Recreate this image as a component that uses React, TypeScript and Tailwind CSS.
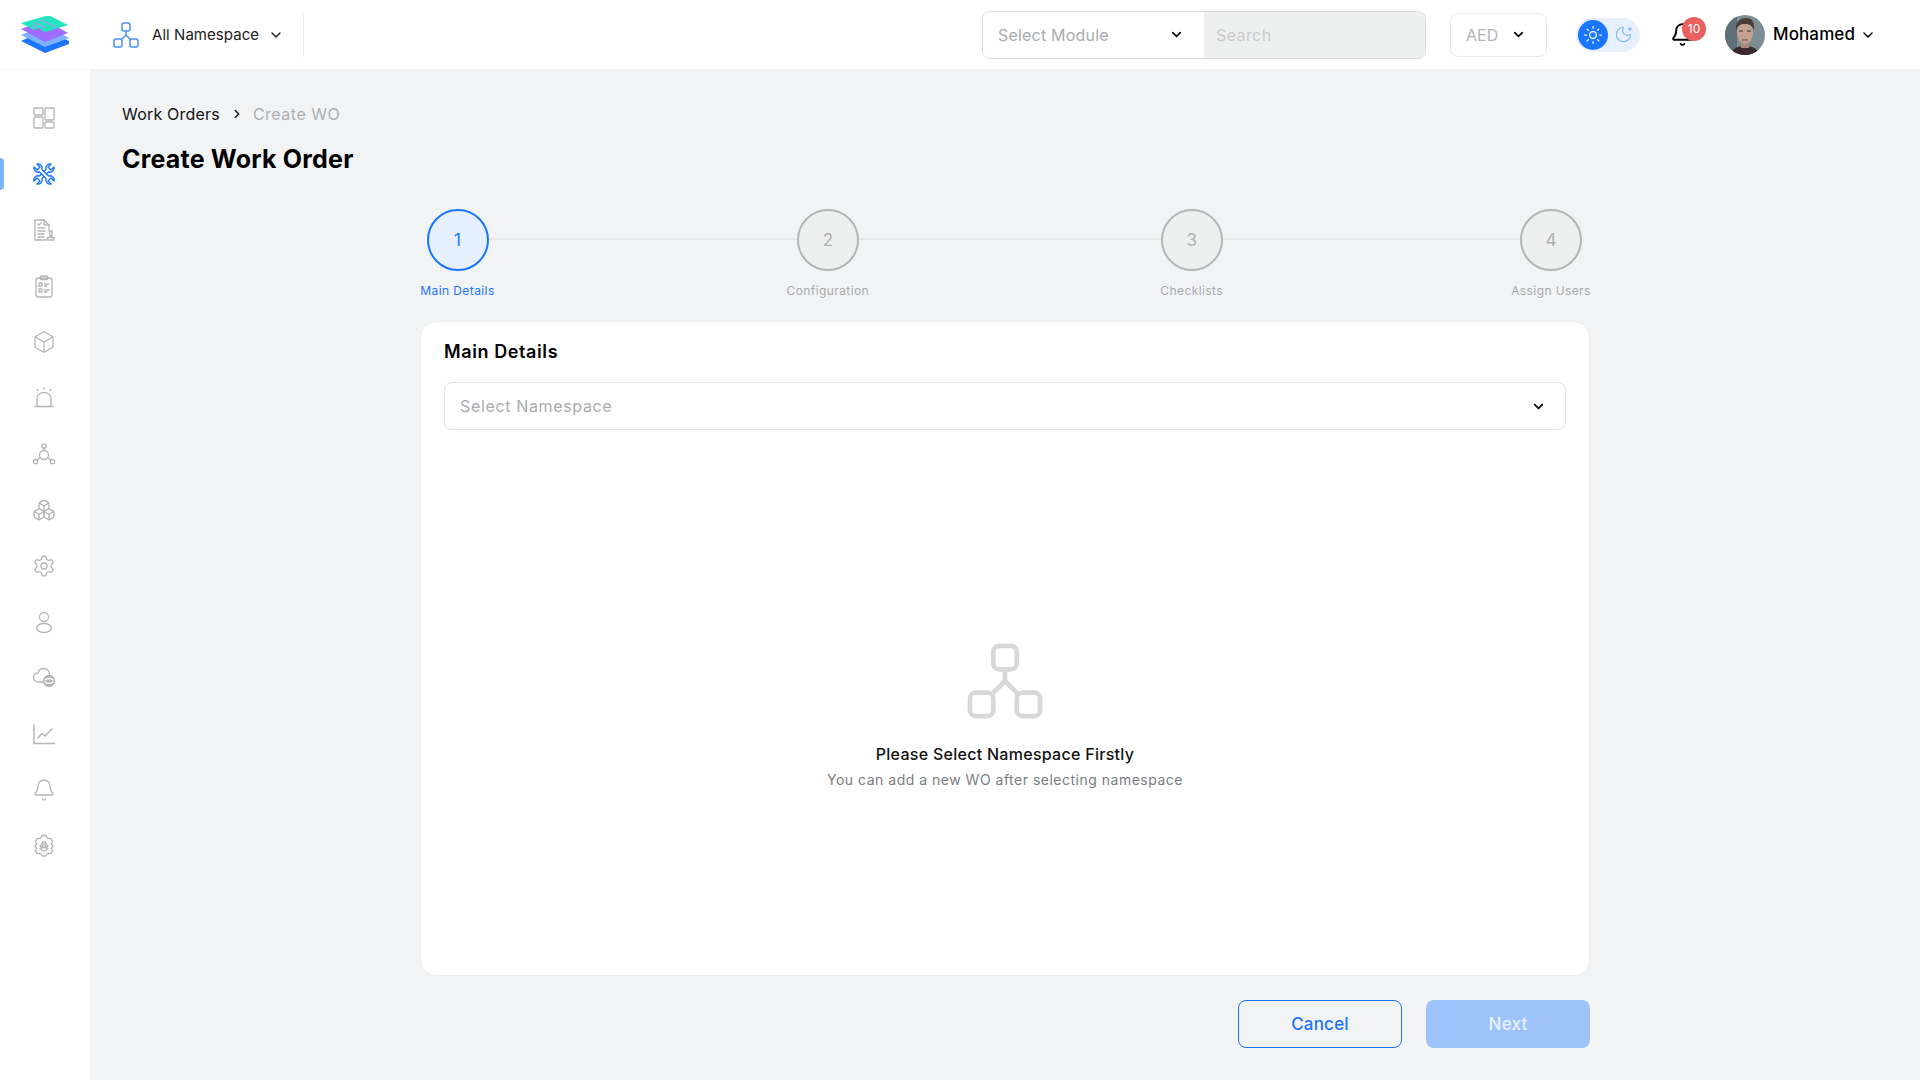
import { Bell, Box, Boxes, ChevronDown, ChevronRight, MoonStar, Settings, Sun } from "lucide-react";
import type { ReactNode } from "react";

const fontStack = "font-['Inter','Noto_Sans',sans-serif]";

function Logo() {
  return (
    <svg width="50" height="40" viewBox="0 0 50 40">
      <path d="M1 26 L25 38 L49 29 L49 26 L25 15 Z" fill="#1a75ff" />
      <path d="M1 20 L25 32 L49 23 L25 10 Z" fill="#7db1ff" />
      <path d="M1 14 L25 27 L48 18 L25 5 Z" fill="#a06bff" />
      <path d="M1 8 L14 15 L18 13 L25 17 L48 10 L30 1 L26 1 Z" fill="#1ee6bd" />
      <path d="M14 7 L26 13 M20 4.5 L36 12 M11 10 L18 13.5" stroke="#8fa6ef" strokeWidth="1.6" fill="none" />
    </svg>
  );
}

function NamespaceIcon({ size, color, sw }: { size: number; color: string; sw: number }) {
  return (
    <svg width={size} height={size} viewBox="0 0 26 26" fill="none" stroke={color} strokeWidth={sw}>
      <rect x="9" y="1" width="8" height="8" rx="2" />
      <rect x="1" y="17" width="8" height="8" rx="2" />
      <rect x="17" y="17" width="8" height="8" rx="2" />
      <path d="M13 9 V13 M13 13 L8 18 M13 13 L18 18" />
    </svg>
  );
}

function Avatar() {
  return (
    <svg width="40" height="40" viewBox="0 0 40 40" className="rounded-full">
      <rect width="40" height="40" fill="#7f8e94" />
      <rect width="12" height="40" fill="#5f6f77" />
      <path d="M6 40 C7 33 13 31 20 31 C27 31 33 33 34 40 Z" fill="#3a2c2e" />
      <rect x="16" y="25" width="8" height="8" fill="#a98a78" />
      <ellipse cx="20" cy="18" rx="8" ry="11" fill="#c4a292" />
      <path d="M11 15 C10 6 16 3 21 3 C27 3 30 7 29 15 C27 10 24 9 20 9 C16 9 13 10 11 15 Z" fill="#4a3d36" />
      <path d="M14 16 H18 M22 16 H26" stroke="#3a2f2a" strokeWidth="1.2" />
      <path d="M17 25 H23" stroke="#6f4f46" strokeWidth="1" />
    </svg>
  );
}

const iconProps = {
  width: 24,
  height: 24,
  viewBox: "0 0 24 24",
  fill: "none",
  stroke: "currentColor",
  strokeWidth: 1.3,
  strokeLinecap: "round" as const,
  strokeLinejoin: "round" as const,
};

const sideIcons: ReactNode[] = [
  <svg {...iconProps} key="dash">
    <rect x="2" y="2" width="9" height="7" rx="1" />
    <rect x="2" y="11" width="9" height="11" rx="1" />
    <rect x="13" y="2" width="9" height="12" rx="1" />
    <rect x="13" y="16" width="9" height="6" rx="1" />
  </svg>,
  <svg {...iconProps} key="tools" strokeWidth={1.4}>
    <path d="M5 2 L8 5 L5 8 L2 5 C1.2 8 4 11 7.5 10 L14 16.5 C13 20 16 22.8 19 22 L16 19 L19 16 L22 19 C22.8 16 20 13 16.5 14 L10 7.5 C11 4 8 1.2 5 2 Z" />
    <path d="M19 2 L16 5 L19 8 L22 5 C22.8 8 20 11 16.5 10 L14.5 12 M9.5 12 L7.5 14 C4 13 1.2 16 2 19 L5 16 L8 19 L5 22 C8 22.8 11 20 10 16.5 L12 14.5 M12 9.5 L14 7.5 C13 4 16 1.2 19 2" />
  </svg>,
  <svg {...iconProps} key="doc">
    <path d="M14 22 H3 V2 H12 L17 7 V13" />
    <path d="M12 2 V7 H17 M6 6 L7 7 L9 5 M6 10 H13 M6 13 H13 M6 16 H12 M6 19 H12" />
    <path d="M18 13 H20 V18 H18 Z M15.5 22 V19.5 H22 V22 Z" />
  </svg>,
  <svg {...iconProps} key="clip">
    <rect x="4" y="4" width="16" height="19" rx="2.5" />
    <rect x="8.5" y="2" width="7" height="3.5" rx="1" />
    <rect x="7" y="9" width="3" height="3" />
    <rect x="7" y="15" width="3" height="3" />
    <path d="M12.5 10 H17 M12.5 12 H15 M12.5 16 H17 M12.5 18 H15" />
  </svg>,
  <Box key="box" size={24} strokeWidth={1.3} />,
  <svg {...iconProps} key="siren">
    <path d="M5 20 V13 C5 9 8 6.5 12 6.5 C16 6.5 19 9 19 13 V20" />
    <path d="M3 20.5 H21 M12 2 V3 M5 3.5 L6 4.5 M19 3.5 L18 4.5" />
  </svg>,
  <svg {...iconProps} key="molecule">
    <circle cx="12" cy="13" r="4.5" />
    <circle cx="12" cy="4" r="2.2" />
    <circle cx="3.5" cy="19.5" r="2.2" />
    <circle cx="20.5" cy="19.5" r="2.2" />
    <path d="M12 6.2 V8.5 M5.3 18.2 L8.3 15.7 M18.7 18.2 L15.7 15.7" />
  </svg>,
  <Boxes key="boxes" size={24} strokeWidth={1.3} />,
  <Settings key="settings" size={24} strokeWidth={1.3} />,
  <svg {...iconProps} key="user">
    <circle cx="12" cy="7" r="4.5" />
    <ellipse cx="12" cy="18" rx="7.5" ry="4.5" />
  </svg>,
  <svg {...iconProps} key="cloud">
    <path d="M12 16 H6.5 C3.5 16 1.5 14 1.5 11.5 C1.5 9 3.5 7 6 7 C6.8 4 9 2.5 11.5 2.5 C14.5 2.5 17 4.5 17.5 8" />
    <circle cx="17" cy="15" r="5.5" fill="currentColor" />
    <path d="M13 14 C15 12 19 12 21 14 M13 16 C15 18 19 18 21 16" stroke="#fff" />
  </svg>,
  <svg {...iconProps} key="chart" strokeWidth={1.5}>
    <path d="M2 3 V21.5 H22.5" />
    <path d="M6 16 L10 11.5 L13 14 L20 7" />
  </svg>,
  <Bell key="bell" size={24} strokeWidth={1.3} />,
  <svg {...iconProps} key="gear">
    <path d="M10 1.5 H14 L15.5 4.3 L18.7 4.3 L20.7 7.5 L19.2 10 L21 12 L19.2 14.5 L20.7 17 L18.7 19.5 L15.5 19.5 L14 22 H10 L8.5 19.5 L5.3 19.5 L3.3 17 L4.8 14.5 L3 12 L4.8 10 L3.3 7.5 L5.3 4.3 L8.5 4.3 Z" />
    <path d="M11 7.5 L8 12.5 H11 Z M13 7.5 L16 12.5 H13 Z M8 14.5 C10 17.5 14 17.5 16 14.5 C14 13.5 10 13.5 8 14.5 Z" />
  </svg>,
];

const steps = [
  { n: 1, label: "Main Details", cls: "w-[75px]" },
  { n: 2, label: "Configuration", cls: "w-[83px] ml-[2px]" },
  { n: 3, label: "Checklists", cls: "w-[62px] ml-[2px]" },
  { n: 4, label: "Assign Users", cls: "w-[78px]" },
];

export default function App() {
  return (
    <div className={`h-screen w-full overflow-hidden flex flex-col bg-white text-black ${fontStack}`}>
      <header className="h-[70px] shrink-0 flex items-center pl-[20px] pr-[44px] bg-white border-b border-[#f4f5f6]">
        <Logo />
        <div className="ml-[43px] flex items-center">
          <NamespaceIcon size={26} color="#4a90f5" sw={1.5} />
          <span className="ml-[13px] pt-[2px] w-[112px] text-[15px] tracking-[0.05px] whitespace-nowrap text-[#1c1c1c]">All Namespace</span>
          <ChevronDown size={16} strokeWidth={2.2} className="ml-[4px] text-[#222]" />
        </div>
        <div className="ml-[19px] h-[44px] w-px bg-[#e8e9ea]" />

        <div className="ml-auto flex items-center">
          <div className="w-[444px] h-[48px] flex rounded-[8px] border border-[#d9dbdd] overflow-hidden">
            <div className="w-[221px] flex items-center justify-between pl-[15px] pr-[20px] bg-white">
              <span className="text-[16px] tracking-[0.2px] text-[#a9abad]">Select Module</span>
              <ChevronDown size={15} strokeWidth={2.6} className="text-black" />
            </div>
            <div className="flex-1 flex items-center pl-[12px] bg-[#eeefef] text-[16px] tracking-[0.4px] text-[#c9cbcc]">Search</div>
          </div>

          <div className="ml-[24px] w-[97px] h-[44px] flex items-center justify-between pl-[15px] pr-[20px] rounded-[8px] border border-[#e8e9ea]">
            <span className="text-[16px] text-[#b3b5b7]">AED</span>
            <ChevronDown size={15} strokeWidth={2.6} className="text-black" />
          </div>

          <div className="ml-[29px] w-[64px] h-[34px] flex items-center pl-[2px] rounded-full bg-[#e6f0fe]">
            <div className="w-[30px] h-[30px] rounded-full bg-[#1a75ff] flex items-center justify-center">
              <Sun size={20} strokeWidth={1.5} className="text-white" />
            </div>
            <MoonStar size={19} strokeWidth={1.5} className="ml-[6px] text-[#8bb8fb]" />
          </div>

          <div className="ml-[30px] relative w-[26px] h-[26px]">
            <Bell size={25} strokeWidth={1.8} className="text-black" />
            <span className="absolute -top-[5px] left-[12px] w-[24px] h-[24px] rounded-full bg-[#ea5f5f] text-white text-[12px] flex items-center justify-center">10</span>
          </div>

          <div className="ml-[29px] flex items-center">
            <Avatar />
            <span className="ml-[8px] pt-[1px] w-[84px] text-[17px] font-medium tracking-[0.12px] text-black">Mohamed</span>
            <ChevronDown size={16} strokeWidth={2.2} className="ml-[3px] text-black" />
          </div>
        </div>
      </header>

      <div className="flex-1 flex min-h-0">
        <aside className="w-[90px] shrink-0 bg-white flex flex-col items-center pt-[36px] pr-[2px] gap-[32px] relative">
          {sideIcons.map((icon, i) => (
            <div key={i} className={`w-[24px] h-[24px] ${i === 1 ? "text-[#1a75ff]" : "text-[#b4b5b7]"}`}>
              {icon}
            </div>
          ))}
          <div className="absolute left-0 top-[88px] w-[4px] h-[32px] rounded-r-[4px] bg-[#79b3ff]" />
        </aside>

        <main className="flex-1 bg-[#f2f3f5] pt-[32px] pl-[32px] overflow-hidden">
          <div className="flex items-center h-[24px] text-[16px]">
            <span className="text-[#111] tracking-[0.2px]">Work Orders</span>
            <ChevronRight size={14} strokeWidth={2.4} className="ml-[10px] text-[#111]" />
            <span className="ml-[9px] text-[#aeb0b2] tracking-[0.5px]">Create WO</span>
          </div>
          <h1 className="mt-[15px] h-[36px] leading-[36px] text-[25px] font-bold text-black tracking-[0.2px]">Create Work Order</h1>

          <div className="ml-[298px] w-[1170px]">
            <div className="mt-[32px] relative flex justify-between">
              <div className="absolute left-[38px] right-[40px] top-[29px] h-[2px] bg-[#e6e7e9]" />
              {steps.map((s) => (
                <div key={s.n} className={`relative flex flex-col items-center ${s.cls}`}>
                  <div
                    className={`w-[62px] h-[62px] rounded-full border-2 pt-[1px] flex items-center justify-center text-[17px] ${
                      s.n === 1
                        ? "border-[#1a75ff] bg-[#e6f0fe] text-[#1a75ff]"
                        : "border-[#b4b5b7] bg-[#eeefef] text-[#aeb0b2]"
                    }`}
                  >
                    {s.n}
                  </div>
                  <span
                    className={`mt-[11px] leading-[18px] text-[12px] tracking-[0.4px] whitespace-nowrap ${
                      s.n === 1 ? "text-[#1a75ff]" : "text-[#a9abad]"
                    }`}
                  >
                    {s.label}
                  </span>
                </div>
              ))}
            </div>

            <section className="mt-[21px] h-[655px] bg-white rounded-[16px] border border-[#eceef0] px-[23px] pt-[16px] flex flex-col">
              <h2 className="h-[27px] leading-[27px] text-[18px] font-semibold tracking-[0.6px] text-black">Main Details</h2>
              <div className="mt-[17px] h-[48px] flex items-center justify-between pl-[15px] pr-[19px] rounded-[8px] border border-[#e4e5e7]">
                <span className="text-[16px] tracking-[0.65px] text-[#a9abad]">Select Namespace</span>
                <ChevronDown size={15} strokeWidth={2.6} className="text-black" />
              </div>
              <div className="mt-[213px] flex flex-col items-center">
                <NamespaceIcon size={76} color="#d7d8da" sw={1.6} />
                <p className="mt-[23px] leading-[24px] text-[16px] font-medium tracking-[0.28px] text-[#111]">Please Select Namespace Firstly</p>
                <p className="mt-[3px] leading-[21px] text-[14px] tracking-[0.5px] text-[#7b7d80]">You can add a new WO after selecting namespace</p>
              </div>
            </section>

            <div className="mt-[24px] flex justify-end gap-[24px]">
              <button className="w-[164px] h-[48px] pt-[1px] rounded-[8px] border border-[#1a75ff] text-[#1a75ff] text-[17px] font-medium tracking-[0.2px]">Cancel</button>
              <button className="w-[164px] h-[48px] pt-[1px] rounded-[8px] bg-[#9dc3fa] text-[#e8f1fe] text-[17px] font-medium tracking-[0.2px]">Next</button>
            </div>
          </div>
        </main>
      </div>
    </div>
  );
}
